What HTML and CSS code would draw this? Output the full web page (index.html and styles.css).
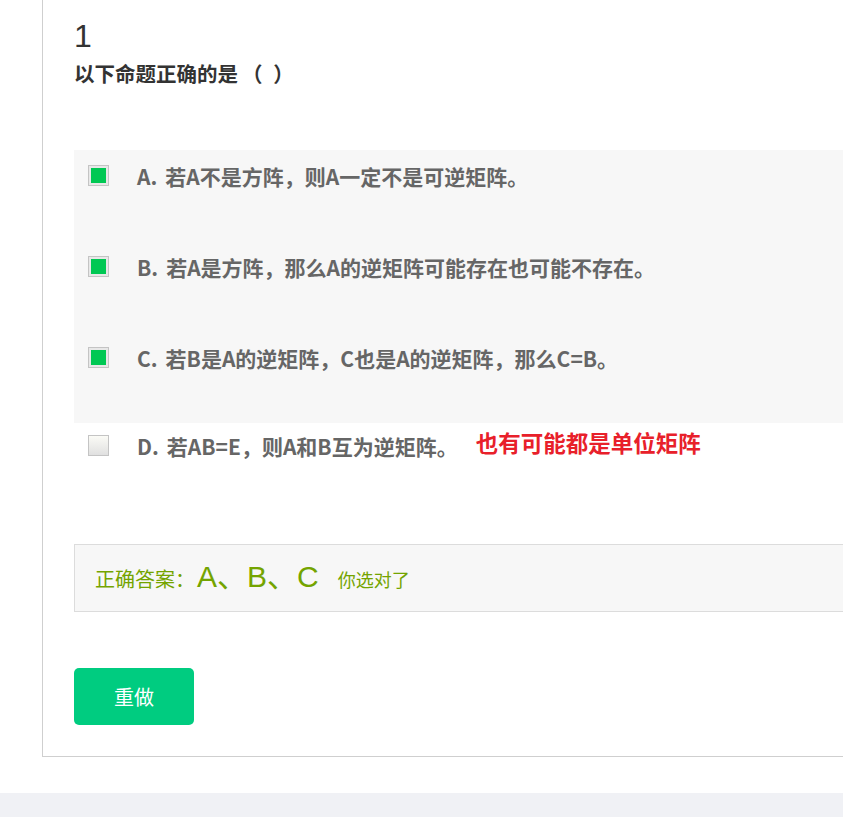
FILE: index.html
```html
<!DOCTYPE html>
<html lang="zh-CN">
<head>
<meta charset="utf-8">
<title>题目</title>
<link rel="stylesheet" href="styles.css">
</head>
<body>
<div class="page">
  <div class="card">
    <div class="q-num">1</div>
    <div class="q-title">以下命题正确的是<span class="paren-l">（</span> <span class="paren-r">）</span></div>
    <div class="options">
      <div class="opt-group">
        <div class="opt"><span class="box checked"></span><span class="letter">A.</span><span class="txt">若A不是方阵，则A一定不是可逆矩阵。</span></div>
        <div class="opt"><span class="box checked"></span><span class="letter">B.</span><span class="txt">若A是方阵，那么A的逆矩阵可能存在也可能不存在。</span></div>
        <div class="opt"><span class="box checked"></span><span class="letter">C.</span><span class="txt">若B是A的逆矩阵，C也是A的逆矩阵，那么C=B。</span></div>
      </div>
      <div class="opt opt-d"><span class="box"></span><span class="letter">D.</span><span class="txt">若AB=E，则A和B互为逆矩阵。</span><span class="note">也有可能都是单位矩阵</span></div>
    </div>
    <div class="answer">
      <span class="ans-label">正确答案：</span><span class="ans-val">A、B、C</span><span class="ans-ok">你选对了</span>
    </div>
    <div class="actions"><button class="redo">重做</button></div>
  </div>
  <div class="footer"></div>
</div>
</body>
</html>
```
FILE: styles.css
```css
html, body {
  margin: 0;
  padding: 0;
  overflow: hidden;
  background: #fff;
}
body {
  font-family: "Noto Sans CJK SC", "Liberation Sans", sans-serif;
  color: #333;
}
.page {
  width: 843px;
  height: 817px;
}
.card {
  margin-left: 42px;
  width: 1000px;
  border-left: 1px solid #cfcfcf;
  border-bottom: 1px solid #cfcfcf;
  padding: 16px 0 31px 31px;
  box-sizing: border-box;
}
.q-num {
  font-family: "Liberation Sans", "Noto Sans CJK SC", sans-serif;
  font-size: 32px;
  line-height: 40px;
  color: #333;
}
.q-title {
  font-size: 20.5px;
  font-weight: bold;
  line-height: 26px;
  margin-top: 4px;
  color: #333;
}
.paren-l {
  margin-left: 4px;
}
.paren-r {
  margin-left: 6px;
}
.options {
  margin-top: 64px;
}
.opt-group {
  background: #f7f7f7;
}
.opt {
  display: flex;
  align-items: center;
  height: 91px;
  box-sizing: border-box;
  padding: 14px 0 53px 14px;
  font-size: 21px;
  font-weight: bold;
  color: #666;
  line-height: 24px;
}
.opt-d {
  padding-top: 11px;
  padding-bottom: 56px;
}
.box {
  width: 21px;
  height: 21px;
  box-sizing: border-box;
  border: 1px solid #c4c4c4;
  background: linear-gradient(#fbfbf6, #e0e0e0);
  margin-right: 28px;
  flex: none;
  position: relative;
  top: -1px;
}
.box.checked {
  background: #00c853;
  box-shadow: inset 0 0 0 2px #e8e8e8;
}
.letter {
  margin-right: 8px;
}
.note {
  color: #e8202a;
  font-size: 22.5px;
  margin-left: 18px;
  position: relative;
  top: -4px;
}
.answer {
  margin-top: 30px;
  height: 68px;
  box-sizing: border-box;
  border: 1px solid #dcdcdc;
  background: #f7f7f7;
  padding-left: 20px;
  display: flex;
  align-items: baseline;
  padding-top: 14px;
  color: #74a400;
}
.ans-label {
  font-size: 20px;
  line-height: 36px;
}
.ans-val {
  font-family: "Liberation Sans", "Noto Sans CJK SC", sans-serif;
  font-size: 30px;
  line-height: 36px;
  margin-left: 2px;
}
.ans-ok {
  font-size: 18px;
  margin-left: 19px;
}
.actions {
  margin-top: 56px;
}
.redo {
  width: 120px;
  height: 57px;
  border: none;
  border-radius: 5px;
  background: #00cc80;
  color: #fff;
  font-family: "Noto Sans CJK SC", sans-serif;
  font-size: 20px;
  padding: 0;
  cursor: pointer;
}
.footer {
  margin-top: 36px;
  height: 30px;
  background: #f0f1f5;
}
```
